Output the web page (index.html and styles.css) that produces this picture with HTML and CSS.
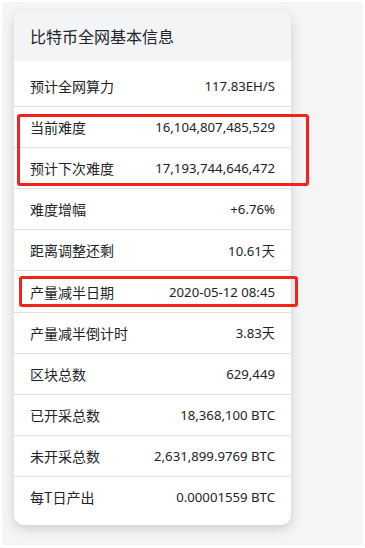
FILE: index.html
```html
<!DOCTYPE html>
<html lang="zh">
<head>
<meta charset="utf-8">
<link rel="stylesheet" href="styles.css">
</head>
<body>
<div class="frame">
  <div class="card">
    <div class="card-header">比特币全网基本信息</div>
    <ul class="list">
      <li class="row"><span>预计全网算力</span><span class="val">117.83EH/S</span></li>
      <li class="row"><span>当前难度</span><span class="val">16,104,807,485,529</span></li>
      <li class="row"><span>预计下次难度</span><span class="val">17,193,744,646,472</span></li>
      <li class="row"><span>难度增幅</span><span class="val">+6.76%</span></li>
      <li class="row"><span>距离调整还剩</span><span class="val">10.61天</span></li>
      <li class="row"><span>产量减半日期</span><span class="val">2020-05-12 08:45</span></li>
      <li class="row"><span>产量减半倒计时</span><span class="val">3.83天</span></li>
      <li class="row"><span>区块总数</span><span class="val">629,449</span></li>
      <li class="row"><span>已开采总数</span><span class="val">18,368,100 BTC</span></li>
      <li class="row"><span>未开采总数</span><span class="val">2,631,899.9769 BTC</span></li>
      <li class="row"><span>每T日产出</span><span class="val">0.00001559 BTC</span></li>
    </ul>
  </div>
  <div class="mark mark-a"></div>
  <div class="mark mark-b"></div>
</div>
</body>
</html>
```
FILE: styles.css
```css
html, body {
  margin: 0;
  padding: 0;
  background: #ffffff;
}
body {
  font-family: "Noto Sans CJK SC", sans-serif;
  color: #212529;
}
.frame {
  position: relative;
  margin: 2px;
  width: 361px;
  height: 543px;
  background: #f4f5f7;
  overflow: hidden;
}
.card {
  position: relative;
  top: 9px;
  left: 12px;
  width: 277px;
  background: #ffffff;
  border-radius: 10px;
  box-shadow: 0 4px 12px rgba(0, 0, 0, 0.16);
  overflow: hidden;
}
.card-header {
  height: 50px;
  display: flex;
  align-items: center;
  padding: 0 16px;
  background: #f3f4f5;
  font-size: 16px;
}
.list {
  list-style: none;
  margin: 0;
  padding: 5px 0 7px;
}
.row {
  height: 41.1px;
  box-sizing: border-box;
  display: flex;
  align-items: center;
  justify-content: space-between;
  padding: 0 16px;
  border-bottom: 1px solid #dee2e6;
  font-size: 14px;
}
.row:last-child {
  border-bottom: none;
}
.val {
  font-family: "Noto Sans", "Noto Sans CJK SC", sans-serif;
  font-size: 13.2px;
}
.mark {
  position: absolute;
  border: 3px solid #f5221b;
  border-radius: 3px;
  box-sizing: border-box;
}
.mark-a {
  left: 15px;
  top: 112px;
  width: 292px;
  height: 72px;
}
.mark-b {
  left: 17px;
  top: 274px;
  width: 279px;
  height: 31px;
}
```
